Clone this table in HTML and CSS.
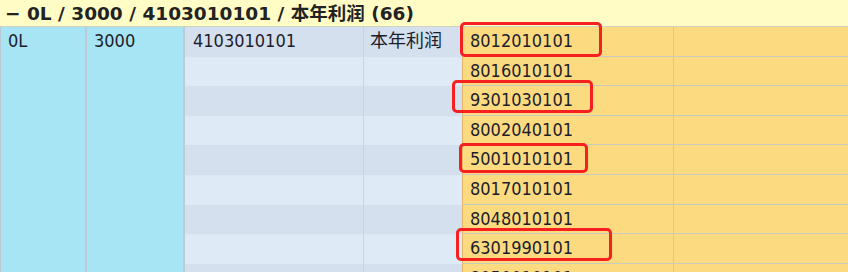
FILE: index.html
```html
<!DOCTYPE html>
<html>
<head>
<meta charset="utf-8">
<link rel="stylesheet" href="styles.css">
</head>
<body>
<div class="view">
  <div class="group-head"><span class="toggle">−</span> 0L / 3000 / 4103010101 / 本年利润 (66)</div>
  <div class="grid">
    <div class="cell c1 span">0L</div>
    <div class="cell c2 span">3000</div>

    <div class="cell c3 dark">4103010101</div><div class="cell c4 dark">本年利润</div><div class="cell c5">8012010101</div><div class="cell c6"></div>
    <div class="cell c3 light"></div><div class="cell c4 light"></div><div class="cell c5">8016010101</div><div class="cell c6"></div>
    <div class="cell c3 dark"></div><div class="cell c4 dark"></div><div class="cell c5">9301030101</div><div class="cell c6"></div>
    <div class="cell c3 light"></div><div class="cell c4 light"></div><div class="cell c5">8002040101</div><div class="cell c6"></div>
    <div class="cell c3 dark"></div><div class="cell c4 dark"></div><div class="cell c5">5001010101</div><div class="cell c6"></div>
    <div class="cell c3 light"></div><div class="cell c4 light"></div><div class="cell c5">8017010101</div><div class="cell c6"></div>
    <div class="cell c3 dark"></div><div class="cell c4 dark"></div><div class="cell c5">8048010101</div><div class="cell c6"></div>
    <div class="cell c3 light"></div><div class="cell c4 light"></div><div class="cell c5">6301990101</div><div class="cell c6"></div>
    <div class="cell c3 dark"></div><div class="cell c4 dark"></div><div class="cell c5">8050010101</div><div class="cell c6"></div>
  </div>
  <div class="mark m1"></div>
  <div class="mark m2"></div>
  <div class="mark m3"></div>
  <div class="mark m4"></div>
</div>
</body>
</html>
```
FILE: styles.css
```css
html, body {
  margin: 0;
  padding: 0;
  background: #ffffff;
  overflow: hidden;
}
.view {
  position: relative;
  width: 848px;
  height: 272px;
  overflow: hidden;
  font-family: "DejaVu Sans Condensed", "DejaVu Sans", "Noto Sans CJK SC", sans-serif;
  color: #1d1d2b;
}
.group-head {
  height: 27px;
  line-height: 27px;
  background: #fffcc6;
  border-bottom: 1px solid #d2d2c4;
  box-sizing: border-box;
  padding-left: 5px;
  font-family: "DejaVu Sans", "Noto Sans CJK SC", sans-serif;
  font-weight: bold;
  font-size: 18.5px;
  color: #222222;
  white-space: nowrap;
}
.grid {
  display: grid;
  grid-template-columns: 86px 98px 179px 98px 212px 1fr;
  grid-auto-rows: 29.6px;
  border-left: 1px solid #b9c7d2;
}
.cell {
  box-sizing: border-box;
  font-size: 18px;
  line-height: 28px;
  padding-left: 7px;
  white-space: nowrap;
  overflow: hidden;
}
.span {
  grid-row: span 9;
  background: #a7e4f4;
  border-right: 2px solid #bccbd4;
}
.c1 { grid-column: 1; }
.c2 { grid-column: 2; }
.c3 { grid-column: 3; padding-left: 8px; border-right: 1px solid #c7d3e0; }
.c4 { grid-column: 4; padding-left: 6px; }
.dark { background: #d4e0ee; }
.light { background: #deeaf5; border-top: 1px solid #dfe8f2; }
.c5 {
  grid-column: 5;
  background: #fcdb80;
  border-left: 1px solid #e6b466;
  border-right: 1px solid #c9c8c0;
  border-bottom: 1px solid #cbcac2;
  padding-left: 7px;
}
.c6 {
  grid-column: 6;
  background: #fcdb80;
  border-bottom: 1px solid #cbcac2;
}
.mark {
  position: absolute;
  box-sizing: border-box;
  border: 3px solid #f5201f;
  border-radius: 5px;
}
.m1 { left: 460px; top: 22px; width: 142px; height: 35px; }
.m2 { left: 452px; top: 80px; width: 141px; height: 33px; }
.m3 { left: 459px; top: 143px; width: 129px; height: 30px; }
.m4 { left: 456px; top: 228px; width: 156px; height: 33px; }
```
